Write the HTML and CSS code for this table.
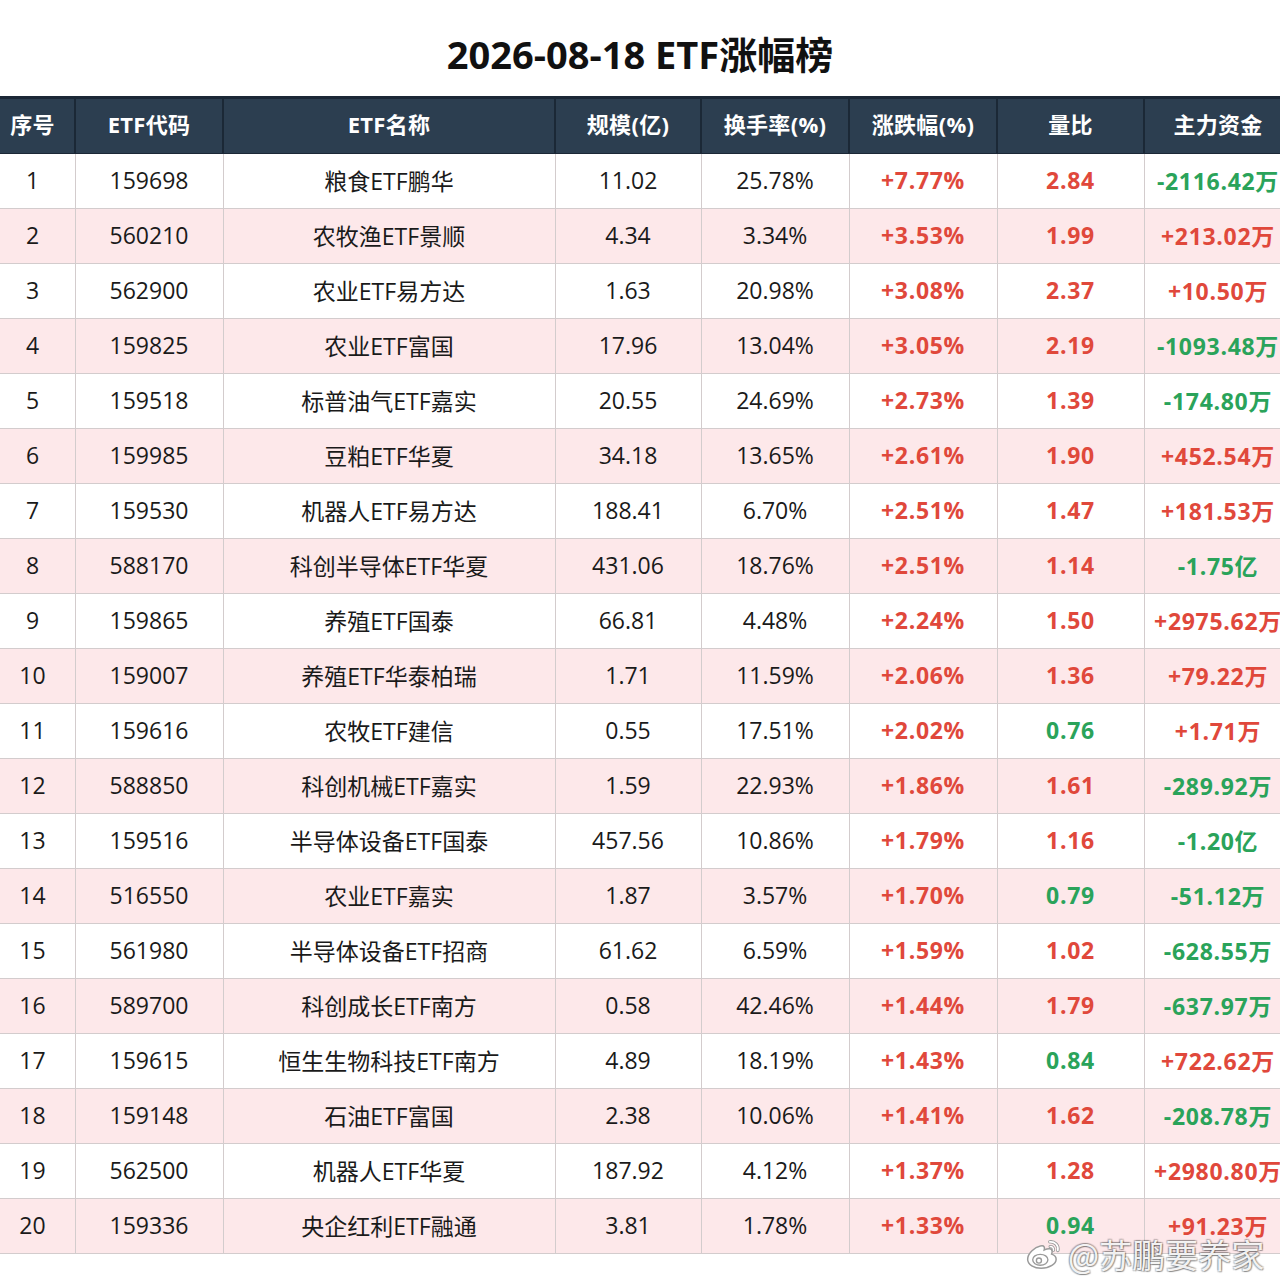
FILE: index.html
```html
<!DOCTYPE html>
<html lang="zh-CN">
<head>
<meta charset="utf-8">
<title>2026-08-18 ETF涨幅榜</title>
<link rel="stylesheet" href="styles.css">
</head>
<body>
<div class="page">
  <h1 class="title">2026-08-18 ETF涨幅榜</h1>
  <table class="board">
    <colgroup>
      <col class="c-idx"><col class="c-code"><col class="c-name"><col class="c-size"><col class="c-turn"><col class="c-chg"><col class="c-vol"><col class="c-flow">
    </colgroup>
    <thead>
      <tr><th>序号</th><th>ETF代码</th><th>ETF名称</th><th>规模(亿)</th><th>换手率(%)</th><th>涨跌幅(%)</th><th>量比</th><th>主力资金</th></tr>
    </thead>
    <tbody>
      <tr><td>1</td><td>159698</td><td>粮食ETF鹏华</td><td>11.02</td><td>25.78%</td><td class="up">+7.77%</td><td class="up">2.84</td><td class="down">-2116.42万</td></tr>
      <tr><td>2</td><td>560210</td><td>农牧渔ETF景顺</td><td>4.34</td><td>3.34%</td><td class="up">+3.53%</td><td class="up">1.99</td><td class="up">+213.02万</td></tr>
      <tr><td>3</td><td>562900</td><td>农业ETF易方达</td><td>1.63</td><td>20.98%</td><td class="up">+3.08%</td><td class="up">2.37</td><td class="up">+10.50万</td></tr>
      <tr><td>4</td><td>159825</td><td>农业ETF富国</td><td>17.96</td><td>13.04%</td><td class="up">+3.05%</td><td class="up">2.19</td><td class="down">-1093.48万</td></tr>
      <tr><td>5</td><td>159518</td><td>标普油气ETF嘉实</td><td>20.55</td><td>24.69%</td><td class="up">+2.73%</td><td class="up">1.39</td><td class="down">-174.80万</td></tr>
      <tr><td>6</td><td>159985</td><td>豆粕ETF华夏</td><td>34.18</td><td>13.65%</td><td class="up">+2.61%</td><td class="up">1.90</td><td class="up">+452.54万</td></tr>
      <tr><td>7</td><td>159530</td><td>机器人ETF易方达</td><td>188.41</td><td>6.70%</td><td class="up">+2.51%</td><td class="up">1.47</td><td class="up">+181.53万</td></tr>
      <tr><td>8</td><td>588170</td><td>科创半导体ETF华夏</td><td>431.06</td><td>18.76%</td><td class="up">+2.51%</td><td class="up">1.14</td><td class="down">-1.75亿</td></tr>
      <tr><td>9</td><td>159865</td><td>养殖ETF国泰</td><td>66.81</td><td>4.48%</td><td class="up">+2.24%</td><td class="up">1.50</td><td class="up">+2975.62万</td></tr>
      <tr><td>10</td><td>159007</td><td>养殖ETF华泰柏瑞</td><td>1.71</td><td>11.59%</td><td class="up">+2.06%</td><td class="up">1.36</td><td class="up">+79.22万</td></tr>
      <tr><td>11</td><td>159616</td><td>农牧ETF建信</td><td>0.55</td><td>17.51%</td><td class="up">+2.02%</td><td class="down">0.76</td><td class="up">+1.71万</td></tr>
      <tr><td>12</td><td>588850</td><td>科创机械ETF嘉实</td><td>1.59</td><td>22.93%</td><td class="up">+1.86%</td><td class="up">1.61</td><td class="down">-289.92万</td></tr>
      <tr><td>13</td><td>159516</td><td>半导体设备ETF国泰</td><td>457.56</td><td>10.86%</td><td class="up">+1.79%</td><td class="up">1.16</td><td class="down">-1.20亿</td></tr>
      <tr><td>14</td><td>516550</td><td>农业ETF嘉实</td><td>1.87</td><td>3.57%</td><td class="up">+1.70%</td><td class="down">0.79</td><td class="down">-51.12万</td></tr>
      <tr><td>15</td><td>561980</td><td>半导体设备ETF招商</td><td>61.62</td><td>6.59%</td><td class="up">+1.59%</td><td class="up">1.02</td><td class="down">-628.55万</td></tr>
      <tr><td>16</td><td>589700</td><td>科创成长ETF南方</td><td>0.58</td><td>42.46%</td><td class="up">+1.44%</td><td class="up">1.79</td><td class="down">-637.97万</td></tr>
      <tr><td>17</td><td>159615</td><td>恒生生物科技ETF南方</td><td>4.89</td><td>18.19%</td><td class="up">+1.43%</td><td class="down">0.84</td><td class="up">+722.62万</td></tr>
      <tr><td>18</td><td>159148</td><td>石油ETF富国</td><td>2.38</td><td>10.06%</td><td class="up">+1.41%</td><td class="up">1.62</td><td class="down">-208.78万</td></tr>
      <tr><td>19</td><td>562500</td><td>机器人ETF华夏</td><td>187.92</td><td>4.12%</td><td class="up">+1.37%</td><td class="up">1.28</td><td class="up">+2980.80万</td></tr>
      <tr><td>20</td><td>159336</td><td>央企红利ETF融通</td><td>3.81</td><td>1.78%</td><td class="up">+1.33%</td><td class="down">0.94</td><td class="up">+91.23万</td></tr>
    </tbody>
  </table>
  <div class="watermark">
    <svg class="weibo" width="38" height="34" viewBox="0 0 36 32" aria-hidden="true">
      <path d="M14.5 8.5c-5 1-12 6.5-12 12.5 0 5.2 6.3 8.5 12.8 8.5 8.3 0 14.2-4.3 14.2-8.6 0-2.8-2.4-4.2-4.3-4.8 .6-1.6 1.2-4.4-1.6-5-2.2-.4-4.5 .7-5.4 1.1 .5-1.8 .6-4.8-3.7-3.7z" fill="#fff" stroke="#9a9a9a" stroke-width="1.4"/>
      <ellipse cx="14.5" cy="21.5" rx="7.2" ry="5.2" fill="#fff" stroke="#9a9a9a" stroke-width="1.3"/>
      <circle cx="13.2" cy="22.2" r="2.4" fill="#fff" stroke="#9a9a9a" stroke-width="1.3"/>
      <path d="M23.5 4.5c4.5-.6 8.6 3.3 7.6 8.2" fill="none" stroke="#9a9a9a" stroke-width="3.2" stroke-linecap="round"/>
      <path d="M23.5 4.5c4.5-.6 8.6 3.3 7.6 8.2" fill="none" stroke="#fff" stroke-width="1.6" stroke-linecap="round"/>
      <path d="M23.8 9c2-.2 3.6 1.4 3.2 3.4" fill="none" stroke="#9a9a9a" stroke-width="3" stroke-linecap="round"/>
      <path d="M23.8 9c2-.2 3.6 1.4 3.2 3.4" fill="none" stroke="#fff" stroke-width="1.4" stroke-linecap="round"/>
    </svg>
    <span class="wm-text">@苏鹏要养家</span>
  </div>
</div>
</body>
</html>
```

FILE: styles.css
```css
html, body {
  margin: 0;
  padding: 0;
  background: #ffffff;
  overflow: hidden;
}

body {
  width: 1280px;
  height: 1288px;
  font-family: "Open Sans", "Noto Sans CJK SC", sans-serif;
  color: #1a1a1a;
}

.page {
  position: relative;
  width: 1280px;
  height: 1288px;
}

.title {
  margin: 0;
  padding-top: 31px;
  height: 65px;
  line-height: 46px;
  font-size: 38px;
  font-weight: 700;
  text-align: center;
  color: #111111;
  font-family: "Open Sans", "Noto Sans CJK SC", sans-serif;
}

.board {
  margin-left: -11px;
  width: 1302px;
  table-layout: fixed;
  border-collapse: collapse;
}

.c-idx { width: 85px; }
.c-code { width: 148px; }
.c-name { width: 332px; }
.c-size { width: 146px; }
.c-turn { width: 148px; }
.c-chg { width: 148px; }
.c-vol { width: 147px; }
.c-flow { width: 148px; }

.board th {
  height: 48px;
  padding: 0 0 6px 0;
  background: #2c3e50;
  color: #ffffff;
  font-size: 22px;
  font-weight: 700;
  letter-spacing: 0.3px;
  text-align: center;
  border-left: 2px solid #1b2836;
  border-right: 2px solid #1b2836;
  border-top: 3px solid #1b2836;
  border-bottom: 1px solid #1b2836;
}

.board td {
  height: 51px;
  padding: 0 0 3px 0;
  font-size: 23px;
  text-align: center;
  white-space: nowrap;
  border: 1px solid #d3cccd;
  color: #1a1a1a;
}

.board tbody tr:nth-child(even) td {
  background: #fde8ea;
}

.board td.up {
  color: #e0483b;
  font-weight: 700;
  letter-spacing: 0.7px;
}

.board td.down {
  color: #2aa35a;
  font-weight: 700;
  letter-spacing: 0.7px;
}

.watermark {
  position: absolute;
  left: 1025px;
  top: 1233px;
  display: flex;
  align-items: center;
  gap: 5px;
}

.wm-text {
  font-family: "Noto Sans CJK SC", sans-serif;
  font-size: 33px;
  line-height: 42px;
  color: rgba(255, 255, 255, 0.92);
  text-shadow: 1px 1px 1px rgba(0, 0, 0, 0.35), -1px -1px 1px rgba(0, 0, 0, 0.25), 1px -1px 1px rgba(0, 0, 0, 0.2), -1px 1px 1px rgba(0, 0, 0, 0.2);
}
```
